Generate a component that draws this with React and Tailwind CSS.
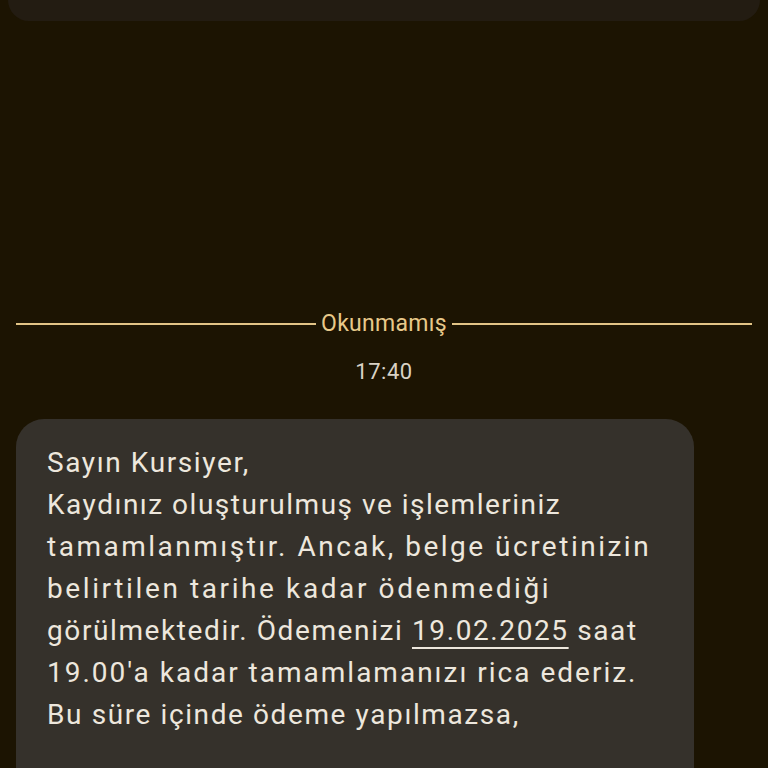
export default function App() {
  return (
    <div className="h-[768px] w-[768px] overflow-hidden bg-[#1c1402] flex flex-col" style={{ fontFamily: "Roboto, 'Noto Sans', sans-serif" }}>
      <div className="mx-[8px] h-[21px] shrink-0 rounded-b-[22px] bg-[#231c12]" />
      <div className="h-[292px] shrink-0" />
      <div className="flex items-center pl-[16px] pr-[16px] h-[22px] shrink-0">
        <div className="flex-1 h-[2px] bg-[#e2c486]" />
        <span className="mx-[5px] text-[23px] leading-[22px] tracking-[0.3px] text-[#e8c98a]">Okunmamış</span>
        <div className="flex-1 h-[2px] bg-[#e2c486]" />
      </div>
      <div className="mt-[24px] text-center text-[22px] leading-[26px] tracking-[0.5px] text-[#d9d2c5]">17:40</div>
      <div className="mt-[34px] ml-[16px] w-[678px] shrink-0 rounded-[28px] bg-[#35312b] pl-[31px] pr-[10px] pt-[23px] pb-[90px] text-[28px] leading-[42px] text-[#ede7dd] whitespace-nowrap">
        <div className="tracking-[1.6px]">Sayın Kursiyer,</div>
        <div className="tracking-[1.5px]">Kaydınız oluşturulmuş ve işlemleriniz</div>
        <div className="tracking-[2.5px]">tamamlanmıştır. Ancak, belge ücretinizin</div>
        <div className="tracking-[2.6px]">belirtilen tarihe kadar ödenmediği</div>
        <div className="tracking-[1.6px]">
          görülmektedir. Ödemenizi{" "}
          <span className="underline decoration-[2px] underline-offset-[7px]">19.02.2025</span> saat
        </div>
        <div className="tracking-[2px]">19.00'a kadar tamamlamanızı rica ederiz.</div>
        <div className="tracking-[1.6px]">Bu süre içinde ödeme yapılmazsa,</div>
      </div>
    </div>
  );
}
